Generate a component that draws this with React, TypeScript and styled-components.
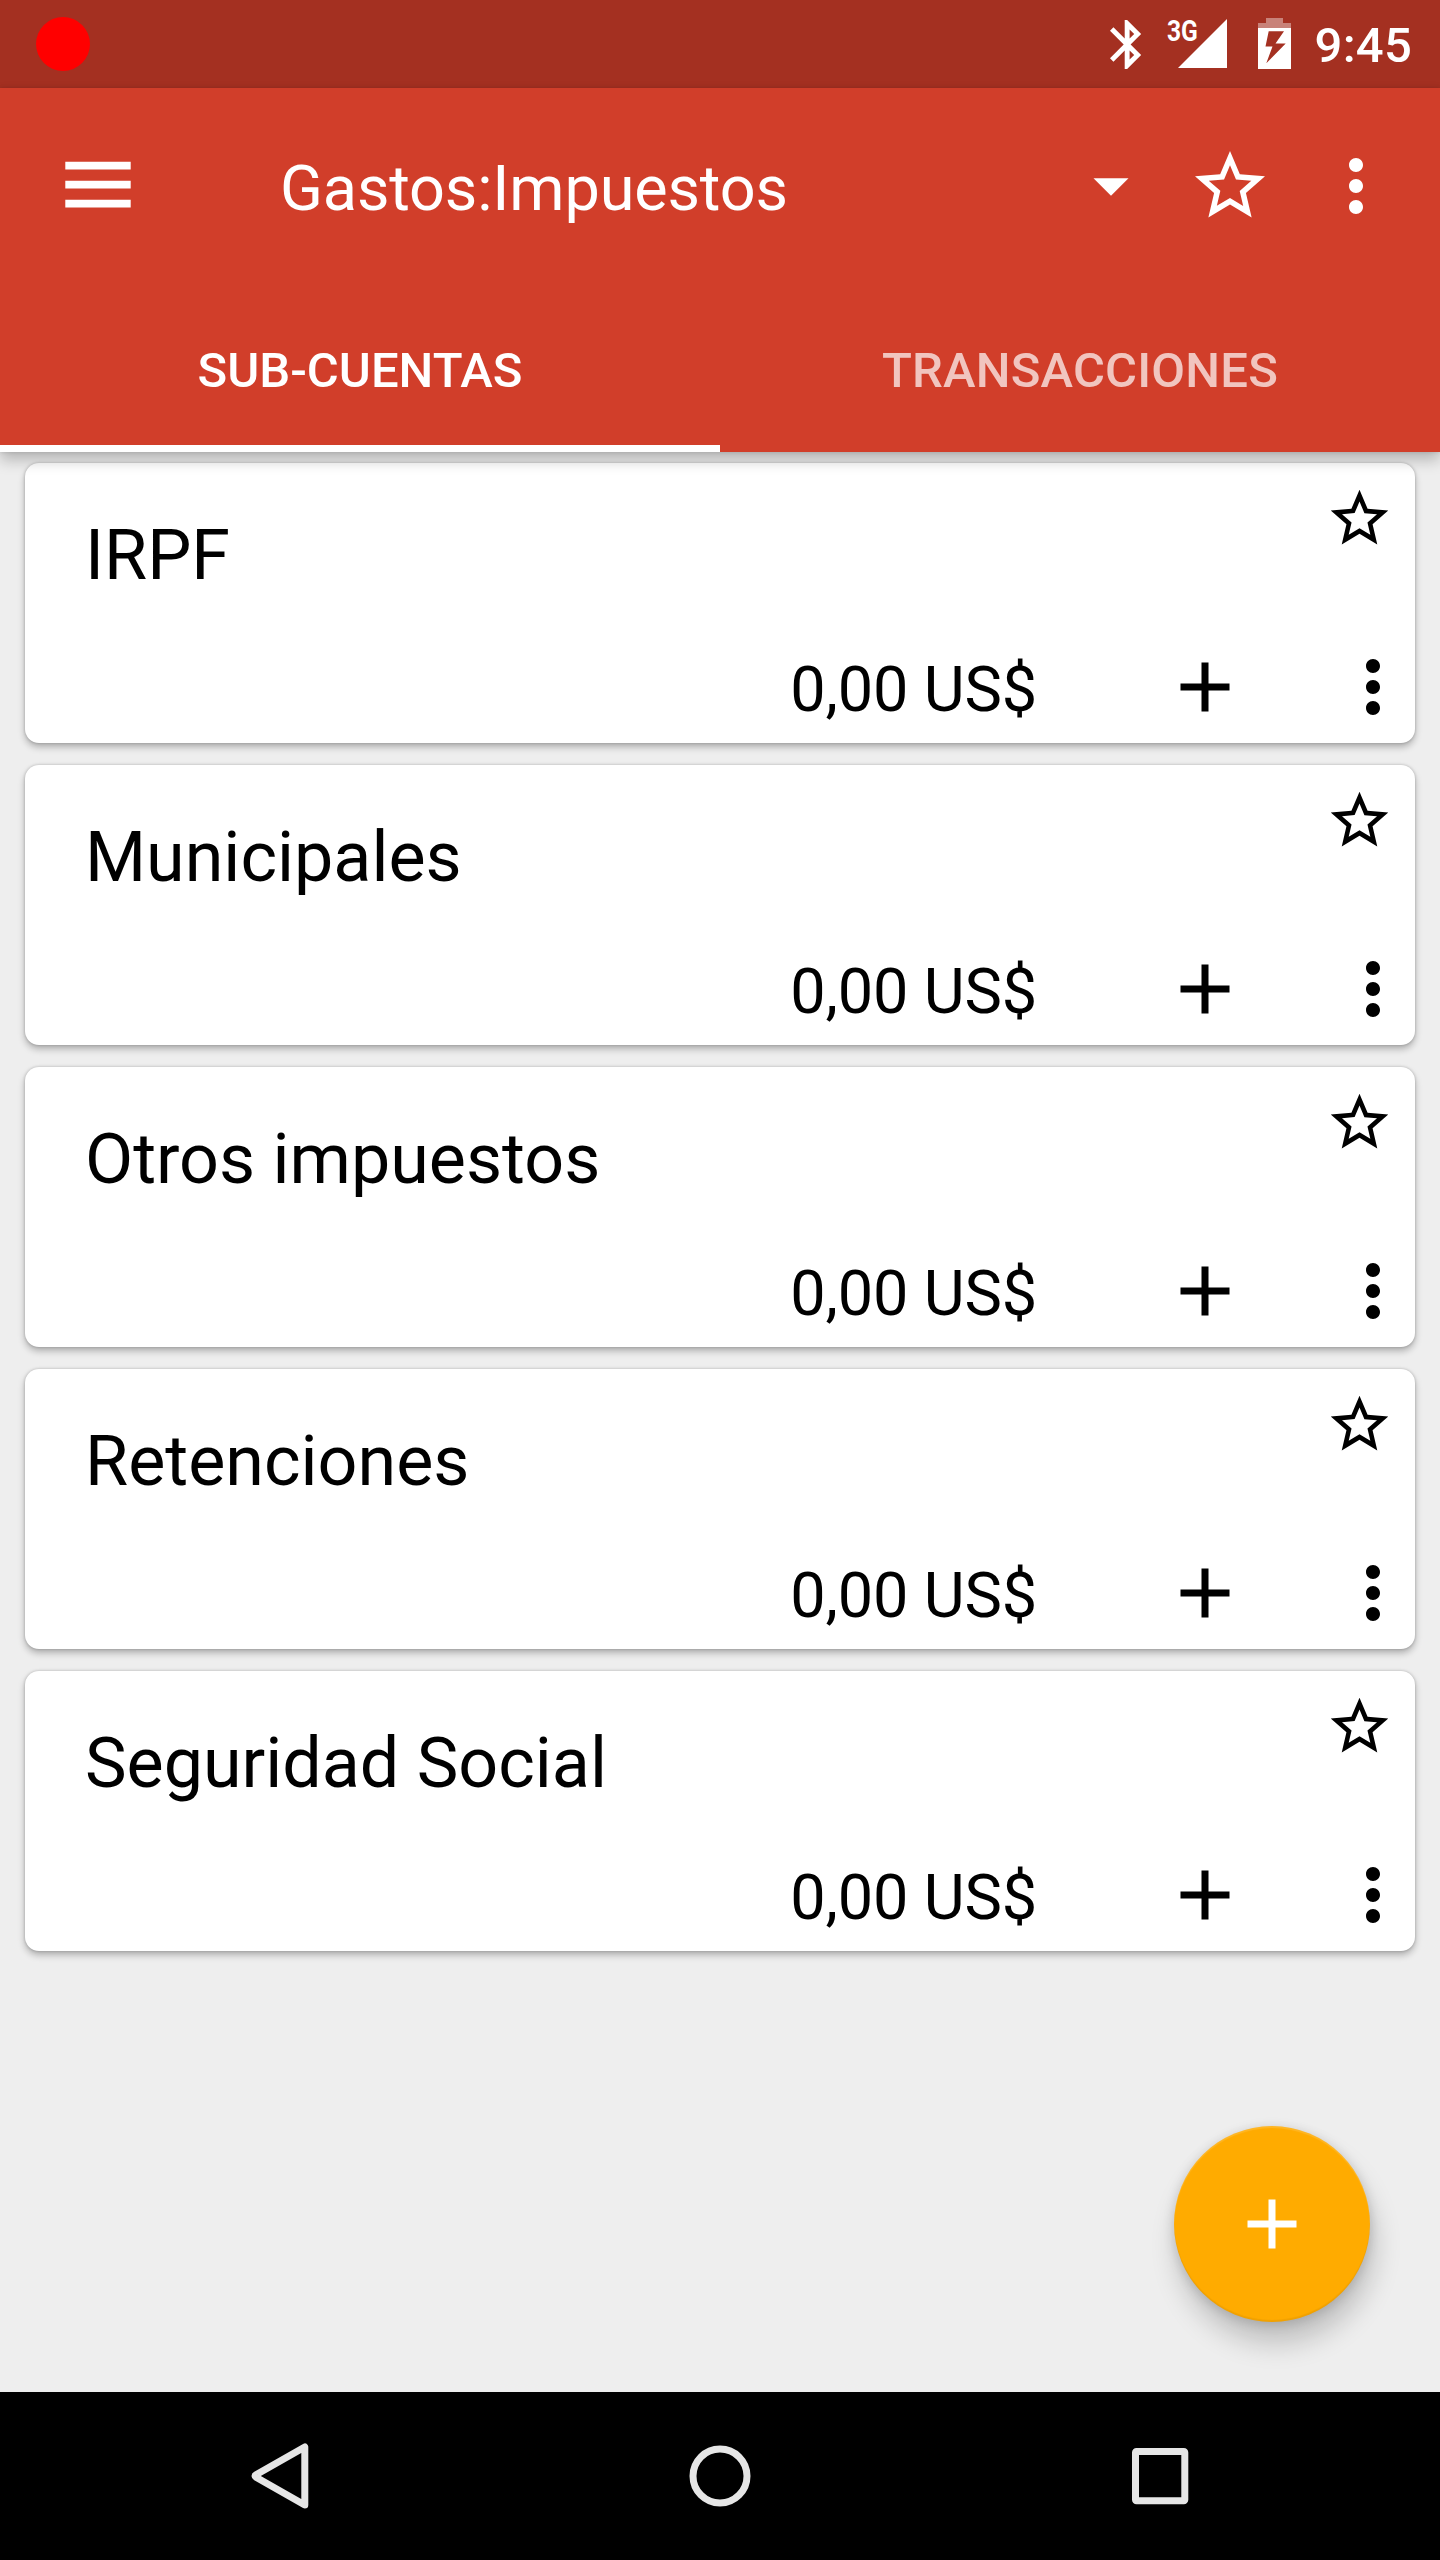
import React from "react";
import styled, { createGlobalStyle } from "styled-components";

const GlobalStyle = createGlobalStyle`
  *, *::before, *::after { box-sizing: border-box; }
  body { margin: 0; background: #eee; }
`;

const Screen = styled.div`
  display: flex;
  flex-direction: column;
  width: 1440px;
  height: 2560px;
  overflow: hidden;
  background: #eee;
  color: #000;
  font-family: Roboto, "Liberation Sans", sans-serif;
  font-weight: 400;
`;

const StatusBar = styled.div`
  display: flex;
  flex: none;
  align-items: flex-start;
  justify-content: space-between;
  height: 88px;
  padding: 17px 28px 0 36px;
  background: #a43021;
  color: #fff;
`;

const RecordDot = styled.div`
  width: 54px;
  height: 54px;
  border-radius: 50%;
  background: #f00;
`;

const StatusIcons = styled.div`
  display: flex;
  align-items: flex-start;
`;

const Network = styled.div`
  display: flex;
  width: 62px;
  height: 54px;
  margin-left: 8px;
`;

const NetworkType = styled.span`
  flex: none;
  width: 11px;
  height: 28px;
  white-space: nowrap;
  font-size: 30px;
  font-weight: 700;
  line-height: 28px;
  transform: scaleX(0.82);
  transform-origin: left;
`;

const Clock = styled.span`
  margin-left: 24px;
  font-size: 49px;
  font-weight: 500;
  letter-spacing: 0.25px;
  line-height: 58px;
`;

const Glyph = styled.svg`
  display: block;
  flex: none;
  fill: currentColor;
`;

const Header = styled.header`
  position: relative;
  z-index: 1;
  flex: none;
  height: 364px;
  background: #d13e2a;
  color: #fff;
  box-shadow: 0 8px 14px rgba(0, 0, 0, 0.24), 0 0 4px rgba(0, 0, 0, 0.12);
`;

const Toolbar = styled.div`
  display: flex;
  align-items: center;
  height: 196px;
  padding: 0 42px 0 56px;
`;

const AccountPicker = styled.div`
  display: flex;
  flex: 1;
  align-items: center;
  justify-content: space-between;
  margin-left: 140px;
`;

const Title = styled.h1`
  margin: 0;
  padding-top: 5px;
  font-size: 63px;
  font-weight: 400;
  letter-spacing: -0.15px;
  line-height: 74px;
`;

const Actions = styled.div`
  display: flex;
  align-items: center;
  gap: 42px;
  margin-left: 35px;
`;

const Tabs = styled.nav`
  display: flex;
  height: 168px;
`;

const Tab = styled.div<{ $active?: boolean }>`
  display: flex;
  flex: 1;
  align-items: center;
  justify-content: center;
  padding-top: ${(p) => (p.$active ? 13 : 6)}px;
  border-bottom: ${(p) => (p.$active ? "7px solid #fff" : "0")};
  color: ${(p) => (p.$active ? "#fff" : "rgba(255, 255, 255, 0.7)")};
  font-size: 49px;
  font-weight: 500;
  letter-spacing: ${(p) => (p.$active ? 0 : 0.2)}px;
  line-height: 58px;
`;

const AccountList = styled.main`
  display: flex;
  flex: 1;
  flex-direction: column;
  gap: 22px;
  padding: 11px 25px 0;
`;

const Card = styled.section`
  display: flex;
  flex: none;
  flex-direction: column;
  justify-content: space-between;
  height: 280px;
  border-radius: 14px;
  background: #fff;
  box-shadow: 0 4px 7px rgba(0, 0, 0, 0.27), 0 0 3px rgba(0, 0, 0, 0.22);
`;

const CardTop = styled.div`
  display: flex;
  align-items: flex-start;
  justify-content: space-between;
  padding: 21px 21px 0 60px;
`;

const AccountName = styled.h2`
  margin: 0;
  padding-top: 30px;
  font-size: 70px;
  font-weight: 400;
  line-height: 82px;
`;

const CardBottom = styled.div`
  display: flex;
  align-items: center;
  justify-content: flex-end;
  height: 84px;
  margin-bottom: 14px;
`;

const Balance = styled.span`
  padding-top: 6px;
  margin-right: 126px;
  font-size: 63px;
  letter-spacing: -0.15px;
  line-height: 74px;
`;

const CardActions = styled.div`
  display: flex;
  gap: 84px;
`;

const AddButton = styled.button`
  position: absolute;
  top: 2126px;
  left: 1174px;
  display: flex;
  align-items: center;
  justify-content: center;
  width: 196px;
  height: 196px;
  padding: 0;
  border: 0;
  border-radius: 50%;
  background: #ffab00;
  color: #fff;
  box-shadow: 4px 21px 28px rgba(0, 0, 0, 0.2), 0 2px 12px rgba(0, 0, 0, 0.15),
    inset 0 -2px 1px rgba(0, 0, 0, 0.06), inset 0 2px 1px rgba(255, 255, 255, 0.14);
`;

const NavigationBar = styled.footer`
  display: flex;
  flex: none;
  align-items: center;
  justify-content: space-between;
  height: 168px;
  padding: 0 238px;
  background: #000;
  color: #e6e6e6;
`;

const paths = {
  star: "M22 9.24l-7.19-.62L12 2 9.19 8.63 2 9.24l5.46 4.73L5.82 21 12 17.27 18.18 21l-1.63-7.03L22 9.24zM12 15.4l-3.76 2.27 1-4.28-3.32-2.88 4.38-.38L12 6.1l1.71 4.04 4.38.38-3.32 2.88 1 4.28L12 15.4z",
  dropdown: "M7 9.8l5 5 5-5z",
  more: "M12 8c1.1 0 2-.9 2-2s-.9-2-2-2-2 .9-2 2 .9 2 2 2zm0 2c-1.1 0-2 .9-2 2s.9 2 2 2 2-.9 2-2-.9-2-2-2zm0 6c-1.1 0-2 .9-2 2s.9 2 2 2 2-.9 2-2-.9-2-2-2z",
  add: "M19 13h-6v6h-2v-6H5v-2h6V5h2v6h6v2z",
  bluetooth:
    "M17.71 7.71L12 2h-1v7.59L6.41 5 5 6.41 10.59 12 5 17.59 6.41 19 11 14.41V22h1l5.71-5.71-4.3-4.29 4.3-4.29zM13 5.83l1.88 1.88L13 9.59V5.83zm1.88 10.46L13 18.17v-3.76l1.88 1.88z",
};

function Icon({ name, size = 84 }: { name: keyof typeof paths; size?: number }) {
  return (
    <Glyph width={size} height={size} viewBox="0 0 24 24" aria-hidden>
      <path d={paths[name]} />
    </Glyph>
  );
}

function Menu() {
  return (
    <Glyph width={84} height={84} viewBox="0 0 84 84" aria-hidden>
      <path d="M9.300 17.700h65.400v7.700H9.300zM9.300 36.700h65.400v7.700H9.300zM9.300 55.700h65.400v7.700H9.300z" />
    </Glyph>
  );
}

function Bluetooth() {
  return (
    <Glyph width={49} height={54} viewBox="5 0.776 20 22.04" aria-hidden>
      <path d={paths.bluetooth} />
    </Glyph>
  );
}

function Signal() {
  return (
    <Glyph width={49} height={54} viewBox="0 0 49 54" aria-hidden>
      <path d="M0 51L49 51V2z" />
    </Glyph>
  );
}

const BatteryGlyph = styled(Glyph)`
  margin-left: 29px;
`;

function Battery() {
  return (
    <BatteryGlyph width={33} height={54} viewBox="0 0 33 54" aria-hidden>
      <path d="M8 1h17v5h8v5H0V6h8z" opacity="0.4" />
      <path
        fillRule="evenodd"
        d="M0 11h33v41H0zM10.7 14.3L7.5 29.5h7L8.3 46.3 27.7 26.5H17.5L26 14.3z"
      />
    </BatteryGlyph>
  );
}

const accounts = ["IRPF", "Municipales", "Otros impuestos", "Retenciones", "Seguridad Social"];

function AccountCard({ name }: { name: string }) {
  return (
    <Card>
      <CardTop>
        <AccountName>{name}</AccountName>
        <Icon name="star" size={69} />
      </CardTop>
      <CardBottom>
        <Balance>0,00 US$</Balance>
        <CardActions>
          <Icon name="add" />
          <Icon name="more" />
        </CardActions>
      </CardBottom>
    </Card>
  );
}

export default function App() {
  return (
    <Screen>
      <GlobalStyle />
      <StatusBar>
        <RecordDot />
        <StatusIcons>
          <Bluetooth />
          <Network>
            <NetworkType>3G</NetworkType>
            <Signal />
          </Network>
          <Battery />
          <Clock>9:45</Clock>
        </StatusIcons>
      </StatusBar>
      <Header>
        <Toolbar>
          <Menu />
          <AccountPicker>
            <Title>Gastos:Impuestos</Title>
            <Icon name="dropdown" />
          </AccountPicker>
          <Actions>
            <Icon name="star" />
            <Icon name="more" />
          </Actions>
        </Toolbar>
        <Tabs>
          <Tab $active>SUB-CUENTAS</Tab>
          <Tab>TRANSACCIONES</Tab>
        </Tabs>
      </Header>
      <AccountList>
        {accounts.map((name) => (
          <AccountCard key={name} name={name} />
        ))}
      </AccountList>
      <AddButton aria-label="Añadir">
        <Icon name="add" />
      </AddButton>
      <NavigationBar>
        <Glyph width={84} height={84} viewBox="0 0 84 84" aria-hidden>
          <path
            d="M66.800 13V71L18 43.200Q16 42 18 40.800Z"
            fill="none"
            stroke="currentColor"
            strokeWidth="7"
            strokeLinejoin="round"
          />
        </Glyph>
        <Glyph width={84} height={84} viewBox="0 0 84 84" aria-hidden>
          <circle cx="42" cy="42" r="27" fill="none" stroke="currentColor" strokeWidth="7" />
        </Glyph>
        <Glyph width={84} height={84} viewBox="0 0 84 84" aria-hidden>
          <rect
            x="17.500"
            y="17.500"
            width="49.300"
            height="49.300"
            rx="1"
            fill="none"
            stroke="currentColor"
            strokeWidth="7"
            strokeLinejoin="round"
          />
        </Glyph>
      </NavigationBar>
    </Screen>
  );
}
